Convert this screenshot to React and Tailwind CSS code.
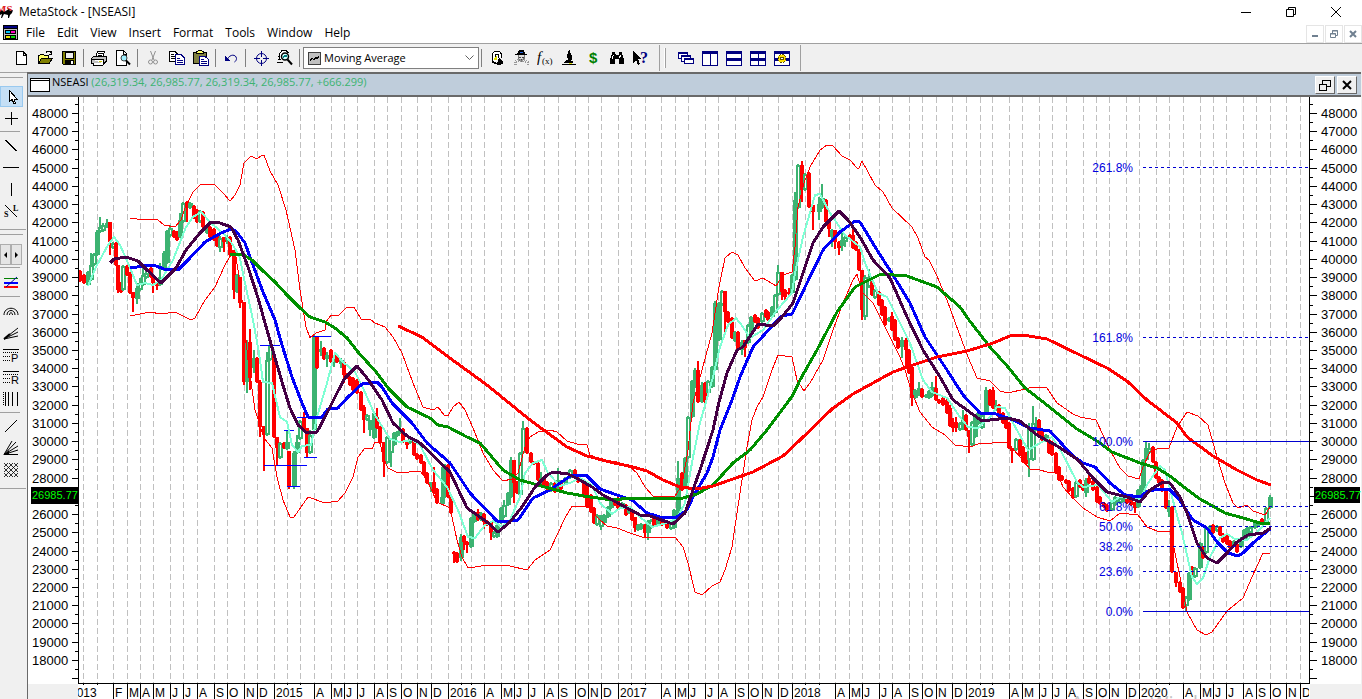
import React from 'react';

const MENUS = ['File', 'Edit', 'View', 'Insert', 'Format', 'Tools', 'Window', 'Help'];

// [x, label] for every month boundary, an empty label only draws the grid line
const MONTHS = [
  [83, ''], [97, ''], [113, 'F'], [127, 'M'], [140, 'A'], [153, 'M'], [170, 'J'], [183, 'J'], [197, 'A'],
  [214, 'S'], [227, 'O'], [244, 'N'], [257, 'D'], [274, '2015'], [287, ''], [300, ''], [314, 'A'],
  [331, 'M'], [344, 'J'], [357, 'J'], [374, 'A'], [387, 'S'], [401, 'O'], [417, 'N'], [431, 'D'],
  [448, '2016'], [461, ''], [471, ''], [484, 'A'], [501, 'M'], [514, 'J'], [528, 'J'], [544, 'A'],
  [558, 'S'], [575, 'O'], [588, 'N'], [601, 'D'], [618, '2017'], [631, ''], [645, ''], [661, 'A'],
  [675, 'M'], [688, 'J'], [705, 'J'], [718, 'A'], [735, 'S'], [748, 'O'], [762, 'N'], [778, 'D'],
  [792, '2018'], [805, ''], [819, ''], [835, 'A'], [849, 'M'], [862, 'J'], [879, 'J'], [892, 'A'],
  [909, 'S'], [922, 'O'], [936, 'N'], [952, 'D'], [966, '2019'], [980, ''], [992, ''], [1009, 'A'],
  [1022, 'M'], [1039, 'J'], [1052, 'J'], [1066, 'A'], [1083, 'S'], [1096, 'O'], [1109, 'N'],
  [1126, 'D'], [1139, '2020'], [1156, ''], [1169, ''], [1183, 'A'], [1200, 'M'], [1213, 'J'],
  [1226, 'J'], [1243, 'A'], [1256, 'S'], [1270, 'O'], [1286, 'N'], [1300, 'D'],
];

// kind (r = down, g = up, o = hollow up), x, top, bottom, high, low
const CANDLES = [
  ['r', 80, 271, 281], ['r', 84, 275, 283], ['g', 88, 272, 285], ['o', 91, 265, 280, 253], ['o', 94, 254, 265],
  ['g', 97, 232, 255, 230], ['o', 100, 227, 232, 217], ['o', 103, 225, 231, 223], ['g', 107, 223, 226, 219, 228],
  ['r', 110, 222, 242, 222, 255], ['o', 113, 243, 248], ['r', 116, 243, 265], ['r', 118, 265, 290, 265, 293],
  ['r', 121, 283, 292], ['o', 123, 266, 290], ['r', 127, 266, 275], ['r', 130, 273, 293],
  ['r', 133, 292, 298, 292, 312], ['g', 137, 288, 299, 283, 304], ['o', 140, 283, 290, 278], ['o', 143, 275, 285, 268],
  ['o', 146, 273, 278, 265], ['r', 151, 268, 277], ['r', 153, 275, 283, 275, 293], ['r', 157, 282, 286, 282, 290],
  ['g', 160, 277, 285, 263], ['g', 164, 253, 270, 251], ['g', 167, 231, 263], ['o', 170, 228, 236, 225],
  ['r', 174, 231, 237], ['r', 177, 232, 240], ['g', 180, 220, 237, 213], ['o', 183, 203, 222],
  ['r', 187, 202, 208, 201, 222], ['g', 190, 203, 208], ['r', 194, 206, 218], ['r', 197, 210, 222],
  ['o', 200, 211, 222], ['r', 203, 212, 227], ['g', 207, 227, 233], ['r', 210, 227, 237], ['r', 214, 229, 240],
  ['r', 217, 236, 246], ['o', 220, 238, 248, 236, 252], ['r', 224, 237, 242, 237, 252], ['o', 227, 237, 240, 235, 244],
  ['r', 230, 237, 255], ['r', 234, 250, 290, 250, 299], ['g', 237, 275, 292], ['r', 240, 277, 303, 277, 308],
  ['r', 244, 302, 382, 302, 385], ['g', 247, 343, 382, 340, 393], ['r', 250, 342, 378, 329, 390],
  ['g', 254, 358, 368, 350, 373], ['r', 257, 358, 382], ['r', 260, 382, 427, 380, 437],
  ['r', 264, 426, 435, 426, 471], ['o', 267, 360, 435, 352], ['o', 270, 345, 360, 343], ['r', 274, 355, 437],
  ['r', 277, 437, 448, 437, 465], ['o', 280, 443, 458], ['r', 284, 443, 448], ['g', 287, 442, 449, 430],
  ['r', 289, 451, 487, 451, 489], ['g', 294, 453, 487, 451, 489], ['g', 297, 442, 453, 435], ['o', 300, 421, 439],
  ['r', 304, 418, 428, 412], ['r', 307, 428, 453, 428, 457], ['o', 310, 435, 453, 430], ['g', 314, 336, 430],
  ['r', 317, 337, 368], ['g', 321, 349, 352, 341, 356], ['r', 324, 348, 359], ['o', 327, 355, 359, 352, 367],
  ['r', 331, 350, 362], ['o', 334, 360, 363, 358, 367], ['r', 337, 355, 362], ['g', 341, 360, 364, 358, 368],
  ['r', 344, 362, 375, 362, 383], ['r', 347, 374, 378], ['r', 350, 377, 385], ['r', 353, 378, 390],
  ['r', 357, 380, 393], ['r', 361, 392, 410], ['r', 364, 407, 420, 405, 433], ['o', 367, 415, 420],
  ['g', 370, 420, 430, 420, 436], ['g', 374, 413, 438], ['r', 377, 417, 428, 408], ['r', 380, 427, 443],
  ['r', 384, 442, 462, 442, 477], ['o', 387, 437, 463], ['o', 391, 438, 453, 438, 467], ['g', 394, 433, 445],
  ['o', 397, 432, 436], ['g', 400, 429, 433, 418], ['r', 403, 429, 442], ['r', 407, 440, 445, 440, 449],
  ['g', 410, 437, 443], ['r', 414, 441, 455], ['r', 417, 454, 459], ['r', 421, 455, 463], ['r', 424, 462, 475],
  ['r', 427, 473, 483], ['g', 431, 482, 485, 482, 492], ['r', 434, 482, 493, 467], ['r', 437, 489, 503],
  ['g', 442, 497, 504, 467], ['g', 445, 465, 497], ['r', 448, 465, 497], ['r', 451, 497, 513],
  ['r', 454, 552, 554, 551, 563], ['r', 457, 553, 562], ['g', 461, 537, 558, 534, 561], ['r', 464, 536, 542, 535, 550],
  ['r', 467, 542, 545, 541, 553], ['g', 471, 518, 547], ['g', 474, 513, 522], ['r', 478, 512, 520, 509],
  ['g', 481, 513, 520], ['r', 484, 514, 522, 513, 529], ['r', 487, 521, 525], ['r', 491, 522, 533, 522, 540],
  ['o', 494, 532, 537], ['g', 497, 525, 537], ['g', 501, 508, 523], ['o', 504, 505, 517, 500], ['g', 508, 493, 505],
  ['g', 511, 460, 497, 457], ['r', 514, 460, 483, 460, 503], ['r', 517, 482, 493], ['o', 520, 453, 495],
  ['o', 523, 428, 453, 421], ['r', 527, 428, 453], ['r', 531, 453, 462], ['r', 534, 462, 464], ['r', 538, 463, 480],
  ['g', 541, 478, 483, 472], ['r', 544, 477, 487], ['r', 547, 482, 489], ['o', 551, 483, 491], ['r', 555, 483, 492],
  ['g', 558, 480, 488, 468], ['r', 561, 482, 489], ['g', 565, 478, 483], ['o', 570, 470, 478], ['r', 575, 470, 478],
  ['r', 578, 475, 482], ['r', 584, 482, 497], ['r', 587, 483, 507], ['r', 591, 495, 512], ['r', 594, 508, 523],
  ['o', 597, 515, 525], ['o', 601, 520, 527, 515, 530], ['g', 604, 515, 523], ['g', 608, 507, 517],
  ['g', 611, 500, 508], ['r', 615, 500, 505], ['r', 618, 498, 508], ['g', 622, 503, 507], ['r', 626, 505, 515],
  ['g', 629, 507, 513], ['r', 632, 512, 520], ['r', 635, 517, 528, 517, 532], ['g', 638, 525, 530],
  ['g', 641, 524, 529], ['r', 645, 525, 533, 524, 537], ['g', 648, 523, 533, 520, 540], ['o', 651, 520, 528],
  ['r', 654, 518, 525], ['g', 658, 520, 525], ['r', 662, 520, 525], ['r', 667, 522, 528], ['o', 671, 522, 529],
  ['g', 674, 510, 528], ['g', 678, 478, 517, 461], ['r', 682, 473, 490], ['g', 685, 458, 488], ['o', 688, 417, 458],
  ['g', 692, 381, 417], ['g', 695, 370, 387, 368], ['r', 698, 370, 402, 361], ['g', 702, 385, 402, 382],
  ['r', 705, 383, 402], ['o', 708, 381, 393], ['g', 712, 367, 387], ['g', 715, 303, 370, 301], ['g', 719, 303, 340],
  ['o', 722, 291, 305], ['r', 725, 291, 312, 291, 334], ['r', 728, 312, 322], ['r', 732, 318, 338],
  ['g', 735, 332, 341], ['r', 738, 332, 350], ['g', 742, 342, 350, 340, 355], ['r', 745, 340, 348, 340, 357],
  ['o', 748, 325, 343], ['g', 751, 317, 333], ['r', 755, 315, 322], ['r', 758, 318, 328], ['o', 762, 313, 322],
  ['r', 766, 310, 317], ['r', 768, 312, 320], ['g', 772, 307, 317], ['o', 775, 295, 313], ['o', 778, 272, 295, 265],
  ['r', 782, 272, 292, 272, 300], ['r', 785, 290, 297, 289, 302], ['r', 789, 292, 294, 288, 296],
  ['g', 792, 275, 293], ['g', 795, 200, 280, 192], ['o', 798, 165, 208], ['r', 802, 165, 190, 161, 202],
  ['o', 805, 174, 190], ['r', 809, 173, 207], ['r', 813, 205, 212, 205, 230], ['g', 819, 204, 212, 197, 220],
  ['g', 822, 198, 208, 184], ['r', 826, 200, 222], ['r', 829, 221, 229, 221, 237], ['g', 832, 230, 237, 229, 247],
  ['r', 835, 230, 242, 230, 249], ['r', 839, 242, 248, 241, 255], ['g', 842, 240, 246, 232, 251],
  ['o', 845, 237, 242, 235, 247], ['r', 850, 235, 239], ['r', 853, 235, 248, 226], ['r', 856, 242, 250],
  ['r', 859, 250, 270], ['r', 862, 270, 310, 270, 320], ['o', 865, 277, 317, 275, 320], ['o', 869, 278, 287, 269],
  ['r', 872, 282, 295], ['o', 875, 290, 298], ['r', 879, 292, 305], ['r', 882, 300, 315], ['r', 885, 307, 325],
  ['g', 889, 318, 321], ['r', 892, 316, 330, 312], ['r', 895, 320, 340], ['r', 898, 338, 348], ['g', 902, 340, 347, 337, 358],
  ['r', 906, 340, 350, 338, 366], ['r', 909, 350, 373], ['r', 912, 367, 398, 365, 406], ['g', 915, 390, 398],
  ['g', 919, 388, 395, 382], ['r', 922, 389, 397], ['g', 926, 395, 397], ['g', 929, 391, 398],
  ['g', 932, 387, 396, 382], ['r', 936, 388, 400, 376], ['r', 939, 400, 403], ['r', 943, 398, 405],
  ['r', 947, 400, 413], ['r', 950, 408, 426, 405], ['r', 953, 424, 428, 418, 432], ['r', 956, 422, 428, 417, 432],
  ['o', 960, 423, 430], ['g', 963, 420, 426, 410, 430], ['r', 966, 415, 430], ['r', 969, 430, 437, 430, 453],
  ['o', 972, 422, 445], ['g', 975, 417, 437], ['g', 978, 413, 424], ['o', 982, 415, 428], ['g', 986, 390, 412, 387],
  ['r', 990, 390, 405], ['r', 993, 390, 408, 387], ['g', 996, 405, 410, 400], ['r', 999, 405, 417],
  ['r', 1003, 413, 423], ['r', 1006, 418, 428], ['r', 1009, 423, 448], ['r', 1012, 448, 451, 448, 463],
  ['o', 1016, 439, 450], ['r', 1020, 440, 455], ['r', 1023, 447, 462], ['r', 1026, 453, 464],
  ['o', 1029, 427, 460, 423, 477], ['o', 1033, 423, 460, 406], ['g', 1036, 423, 430, 417], ['r', 1039, 420, 435],
  ['r', 1042, 432, 440], ['g', 1046, 435, 441], ['r', 1049, 440, 453], ['r', 1052, 442, 455], ['r', 1056, 453, 473],
  ['r', 1059, 467, 480], ['r', 1062, 476, 480], ['r', 1066, 480, 483], ['r', 1069, 481, 491],
  ['r', 1073, 488, 498], ['o', 1076, 482, 497], ['r', 1080, 480, 487], ['r', 1083, 485, 490],
  ['g', 1086, 480, 493, 478, 497], ['r', 1089, 478, 483, 475], ['r', 1093, 481, 490], ['r', 1097, 487, 502],
  ['r', 1100, 497, 504], ['r', 1104, 503, 507], ['r', 1107, 505, 511], ['o', 1112, 502, 510], ['g', 1115, 497, 505],
  ['o', 1120, 498, 503], ['g', 1124, 497, 501], ['r', 1127, 496, 503], ['r', 1131, 498, 505],
  ['r', 1135, 502, 508, 502, 513], ['g', 1138, 490, 507], ['g', 1141, 486, 497], ['g', 1143, 460, 493],
  ['g', 1146, 448, 460, 441], ['o', 1149, 448, 453, 443], ['r', 1153, 447, 462], ['r', 1156, 462, 478],
  ['r', 1159, 477, 483], ['r', 1162, 480, 491], ['r', 1166, 490, 508], ['g', 1169, 507, 512, 500, 517],
  ['r', 1172, 507, 572], ['r', 1176, 572, 583, 572, 587], ['r', 1180, 582, 592], ['r', 1183, 588, 608],
  ['o', 1186, 597, 606, 596, 611], ['g', 1189, 573, 600], ['r', 1192, 567, 575], ['o', 1195, 568, 577],
  ['g', 1200, 543, 568], ['r', 1203, 547, 558], ['o', 1206, 528, 553], ['g', 1210, 526, 532], ['r', 1213, 525, 533],
  ['o', 1217, 526, 531], ['r', 1220, 527, 535], ['r', 1223, 534, 542], ['r', 1227, 535, 544], ['r', 1230, 541, 548],
  ['g', 1234, 541, 546], ['r', 1237, 544, 552], ['g', 1241, 538, 547], ['g', 1244, 530, 540], ['g', 1247, 528, 537],
  ['o', 1250, 527, 533], ['g', 1255, 523, 528, 520], ['g', 1259, 522, 525], ['r', 1262, 519, 523],
  ['o', 1266, 508, 523], ['g', 1270, 497, 508, 495],
];

const UPPER_BAND =
  '130,218 137,219 158,220 164,225 175,227 181,220 185,208 193,192 201,184 215,185 223,193 230,201 235,195 240,185 244,163 251,156 257,159 261,156 264,155 270,171 278,185 286,210 295,250 300,290 306,327 310,338 316,333 325,330 326,322 331,315 339,315 347,307 354,307 361,319 371,320 375,323 385,327 393,337 402,353 413,383 423,407 433,410 438,407 444,415 448,416 453,407 459,402 465,410 473,428 483,453 493,470 503,481 512,479 518,473 525,447 530,437 538,432 550,430 557,432 567,441 577,444 587,445 590,455 600,459 617,462 630,467 637,473 645,487 653,496 675,496 682,485 688,450 693,403 702,370 712,333 719,287 725,258 732,252 738,255 745,268 755,281 763,278 776,286 783,275 792,272 795,247 798,207 804,183 810,167 820,150 827,145 833,146 842,156 850,160 857,168 859,168 862,161 868,172 875,185 883,192 892,208 912,227 918,238 925,257 929,260 937,276 947,300 955,322 968,357 977,378 990,381 1000,391 1008,393 1025,389 1033,387 1047,388 1057,403 1073,414 1080,417 1096,420 1110,450 1120,468 1128,476 1139,479 1143,467 1150,452 1157,449 1169,448 1177,427 1187,412 1198,416 1208,425 1217,457 1225,483 1233,503 1238,508 1247,505 1253,511 1265,515 1270,507';

const LOWER_BAND =
  '130,316 150,312 161,314 175,312 191,320 195,318 205,300 215,287 225,265 231,255 236,257 241,290 248,360 255,410 264,438 272,448 277,477 283,500 290,517 294,517 308,497 325,503 338,501 345,493 353,477 358,457 365,448 372,449 375,442 380,442 383,457 388,468 398,473 420,471 427,480 437,502 450,508 457,540 462,557 468,568 488,565 510,566 527,570 535,560 550,550 558,533 565,518 572,506 587,506 600,520 607,526 617,528 630,533 645,538 657,537 675,537 683,547 688,563 695,592 702,595 712,586 720,582 725,570 732,547 737,513 742,480 747,447 752,420 757,407 763,397 772,370 778,355 792,357 797,380 804,391 810,383 823,360 833,330 843,303 853,280 857,274 862,292 873,303 890,337 900,357 905,370 912,393 920,412 932,427 945,435 955,445 970,447 978,444 1007,442 1020,457 1030,469 1040,470 1047,472 1057,472 1063,487 1073,498 1083,508 1097,517 1110,521 1120,513 1138,515 1147,527 1157,531 1170,532 1173,543 1182,587 1187,612 1197,630 1206,635 1212,632 1227,611 1243,598 1252,577 1263,553 1270,553';

const AVERAGES = [
  {
    name: 'aqua',
    color: '#7fffd4',
    width: 2,
    points:
      '88,286 96,267 108,245 114,237 120,245 128,263 137,285 145,283 153,285 161,280 173,260 186,227 193,217 201,212 211,223 225,235 233,245 240,258 245,283 253,320 259,353 263,382 272,383 280,417 287,422 292,445 298,452 302,446 311,445 317,417 327,383 335,353 343,362 355,372 363,388 375,415 390,439 400,442 412,440 420,445 433,470 447,487 458,510 468,537 475,538 485,525 493,521 502,527 510,520 520,497 525,473 533,463 542,460 548,473 560,486 570,483 580,478 592,485 600,503 612,514 620,508 630,507 640,517 652,527 667,523 677,518 685,503 693,457 700,423 713,377 720,347 728,325 736,318 743,327 750,338 763,330 777,310 792,293 795,273 803,237 815,195 820,194 830,213 845,235 860,247 865,263 878,293 887,297 900,323 910,343 923,380 932,392 947,398 960,417 968,427 978,428 990,417 997,407 1005,408 1013,423 1028,450 1040,443 1052,437 1062,453 1077,482 1083,487 1098,485 1112,502 1120,497 1140,499 1148,483 1160,466 1165,470 1172,497 1182,533 1192,577 1197,584 1203,578 1210,557 1220,538 1227,534 1235,539 1247,540 1257,532 1270,518',
  },
  {
    name: 'blue',
    color: '#0000f8',
    width: 3,
    points:
      '130,268 150,265 156,266 164,269 178,270 188,260 205,242 221,233 231,229 236,231 245,243 250,257 263,292 275,320 282,345 292,377 302,403 308,417 322,417 328,409 338,408 348,397 362,384 377,382 382,387 392,403 412,423 427,443 450,463 470,493 497,521 502,522 518,520 533,498 550,490 557,485 572,475 586,475 600,489 617,495 632,500 647,513 660,517 675,518 687,510 693,497 707,473 713,457 720,430 732,400 740,377 753,347 775,323 782,316 792,314 795,308 807,283 823,250 840,232 855,221 860,222 877,250 893,275 910,303 925,337 947,370 963,395 980,413 993,413 1013,420 1030,428 1050,431 1073,456 1083,463 1095,467 1110,483 1125,495 1140,497 1148,491 1160,489 1169,489 1178,498 1193,520 1207,528 1217,542 1228,553 1238,556 1243,553 1253,543 1270,529',
  },
  {
    name: 'green',
    color: '#009000',
    width: 3,
    points:
      '230,254 242,254 252,260 262,270 275,282 287,295 300,308 310,317 325,322 335,328 347,338 358,352 377,373 388,388 407,407 430,418 438,425 448,427 467,437 480,443 503,470 520,480 545,487 567,493 590,497 613,500 630,498 650,498 683,498 697,494 713,485 733,463 750,450 767,430 793,395 800,380 817,350 837,312 855,287 867,281 881,274 907,276 937,287 960,307 969,320 990,347 1008,367 1025,388 1047,405 1077,429 1097,441 1112,452 1140,463 1157,468 1170,476 1185,488 1200,499 1225,513 1243,518 1260,523 1270,523',
  },
  {
    name: 'red',
    color: '#ff0000',
    width: 3,
    points:
      '398,326 422,337 447,356 487,385 530,420 567,447 587,456 610,462 633,467 647,471 663,480 680,487 697,489 713,486 753,472 783,456 800,440 832,409 853,394 893,372 913,365 937,357 967,351 993,343 1010,336 1023,335 1047,339 1080,355 1107,368 1127,381 1147,400 1177,423 1187,437 1213,456 1237,470 1257,480 1271,485',
  },
  {
    name: 'purple',
    color: '#440044',
    width: 3,
    points:
      '110,263 114,259 126,257 138,261 146,269 161,283 176,268 186,250 200,233 211,222 220,223 231,227 238,240 248,267 258,298 271,344 282,382 290,408 298,425 307,433 317,432 325,417 337,393 345,378 357,366 367,378 382,400 393,423 407,436 420,443 450,472 467,508 487,522 498,532 510,522 522,507 535,487 547,475 553,472 568,474 580,480 592,487 603,495 627,508 640,515 650,516 673,524 685,513 693,490 700,470 713,430 719,402 727,373 737,350 743,347 758,324 773,326 782,317 793,303 803,273 813,243 823,227 832,218 839,211 848,220 860,237 873,260 890,278 907,317 923,350 940,377 953,400 982,421 1007,418 1020,421 1037,435 1057,446 1077,459 1093,478 1107,492 1127,497 1140,502 1150,490 1163,482 1170,483 1180,497 1187,513 1197,543 1207,558 1217,563 1227,553 1237,542 1248,535 1263,533 1271,528',
  },
];

const FIB = [
  ['261.8%', 167, true],
  ['161.8%', 337, true],
  ['100.0%', 441, false],
  ['61.8%', 506, true],
  ['50.0%', 526, true],
  ['38.2%', 546, true],
  ['23.6%', 571, true],
  ['0.0%', 611, false],
];

// short horizontal support / resistance marks: x1, x2, y
const MARKS = [
  [260, 280, 345], [310, 331, 336], [297, 323, 417], [284, 294, 430], [304, 317, 457], [264, 307, 465], [287, 300, 486],
];

const PRICES = Array.from({ length: 31 }, (_, i) => 48000 - i * 1000);
const priceY = (v) => Math.round(113 + ((48000 - v) / 1000) * 18.23);

const Candle = ({ data }) => {
  const [kind, x, top, bottom, high = top - 1, low = bottom + 1] = data;
  const color = kind === 'r' ? '#ff0000' : '#3cb371';
  return (
    <g fill={color}>
      <rect x={x - 1} y={high} width="2" height={low - high} />
      <rect x={x - 2} y={top} width={kind === 'r' ? 4 : 5} height={bottom - top} />
      {kind === 'o' && bottom - top > 4 && (
        <rect x={x} y={top + 2} width="1" height={bottom - top - 4} fill="#fff" />
      )}
    </g>
  );
};

const Chart = () => (
  <svg
    viewBox="28 97 1333 602"
    className="block h-auto w-full bg-white font-['Liberation_Sans',Arial,sans-serif]"
    role="img"
    aria-label="NSEASI weekly price chart"
  >
    <g shapeRendering="crispEdges">
      <g stroke="#c0c0c0" strokeDasharray="6 3">
        {MONTHS.map(([x]) => (
          <line key={x} x1={x + 0.5} x2={x + 0.5} y1="97" y2="683" />
        ))}
      </g>
      <g>
        {CANDLES.map((c) => (
          <Candle key={c[1]} data={c} />
        ))}
      </g>
      <g stroke="#0000ff">
        {MARKS.map(([x1, x2, y]) => (
          <line key={y} x1={x1} x2={x2} y1={y + 0.5} y2={y + 0.5} />
        ))}
      </g>
      <g fill="none" strokeLinejoin="round">
        <polyline points={UPPER_BAND} stroke="#ff0000" />
        <polyline points={LOWER_BAND} stroke="#ff0000" />
        {AVERAGES.map((a) => (
          <polyline key={a.name} points={a.points} stroke={a.color} strokeWidth={a.width} />
        ))}
      </g>
      <g stroke="#0000d0">
        {FIB.map(([label, y, dashed]) => (
          <line key={label} x1="1143" x2="1309" y1={y + 0.5} y2={y + 0.5} strokeDasharray={dashed ? '3 3' : undefined} />
        ))}
      </g>
    </g>
    <g fill="#0000e0" fontSize="12" textAnchor="end">
      {FIB.map(([label, y]) => (
        <text key={label} x="1133" y={y + 5}>
          {label}
        </text>
      ))}
    </g>

    {/* price axes */}
    <g shapeRendering="crispEdges" stroke="#000">
      <path d="M78.5 97V684M1309.5 97V684M78 683.5H1310" />
      {PRICES.map((v) => {
        const y = priceY(v) + 0.5;
        return (
          <path key={v} d={`M72 ${y}H78M1310 ${y}H1317M75 ${y - 9}H78M1310 ${y - 9}H1313`} />
        );
      })}
      <path d="M75 669.5H78M1310 669.5H1313M72 678.5H78M1310 678.5H1317" />
    </g>
    <g fontSize="13">
      {PRICES.filter((v) => v !== 27000).map((v) => (
        <React.Fragment key={v}>
          <text x="32" y={priceY(v) + 5}>{v}</text>
          <text x="1321" y={priceY(v) + 5}>{v}</text>
        </React.Fragment>
      ))}
    </g>
    <rect x="31" y="487" width="48" height="17" />
    <rect x="1314" y="487" width="46" height="16" />
    <g fill="#00ff00" fontSize="11">
      <text x="32" y="499">26985.77</text>
      <text x="1315" y="499">26985.77</text>
    </g>

    {/* time axis */}
    <rect x="28" y="684" width="50" height="15" fill="#f0f0f0" />
    <rect x="1310" y="684" width="51" height="15" fill="#f0f0f0" />
    <text x="1071" y="710" fontSize="20" fill="#c4c4c4" className="font-['Open_Sans',sans-serif]">
      Activate Windows
    </text>
    <g shapeRendering="crispEdges" stroke="#000">
      {MONTHS.map(([x, label]) => (
        <line key={x} x1={x + 0.5} x2={x + 0.5} y1="684" y2={label ? 699 : 685} />
      ))}
    </g>
    <svg x="78" y="684" width="1231" height="15" viewBox="78 684 1231 15" fontSize="12">
      <text x="70" y="697">2013</text>
      {MONTHS.map(([x, label]) => (
        <text key={x} x={x + 2} y="697">
          {label}
        </text>
      ))}
    </svg>
  </svg>
);

const Icon = ({ children, size = 16 }) => (
  <svg width={size} height={size} viewBox="0 0 16 16" fill="none" stroke="#000" shapeRendering="crispEdges">
    {children}
  </svg>
);

const NAVY = '#000080';

const TOOLS = [
  [
    ['New', <path d="M3.5 1.5H10L13.5 5V14.5H3.5ZM10 1.5V5.5H13.5" fill="#fff" />],
    [
      'Open',
      <>
        <path d="M1.5 13V5.5H2.5L3.5 4.5H6.5L7.5 5.5H11.5V8" fill="#ffff66" />
        <path d="M1.5 13.5L4.5 8.5H15.5L12 13.5Z" fill="#808000" />
        <path d="M9 2.5L10 1.5H13L14.5 3.5M14.5 1V4.5H11.5" />
      </>,
    ],
    [
      'Save',
      <>
        <path d="M1.5 1.5H14.5V14.5H2.5L1.5 13.5Z" fill="#808000" />
        <path d="M4.5 2H12V8H4.5Z" fill="#f0f0f0" stroke="#000" />
        <rect x="4" y="10" width="9" height="5" fill="#000" stroke="none" />
        <rect x="10" y="11" width="2" height="3" fill="#fff" stroke="none" />
      </>,
    ],
  ],
  [
    [
      'Print',
      <>
        <path d="M4.5 7.5L6.5 1.5H13.5L11.5 7.5" fill="#fff" />
        <path d="M7 3.5H11.5M6.5 5.5H10.5" />
        <path d="M0.5 8.5L2.5 6.5H15.5V11L13 13.5H0.5Z" fill="#c0c0c0" />
        <path d="M0.5 9.5H12.5V13.5M2.5 13.5V15.5H11.5L14 13" fill="#fff" />
        <path d="M8 11.5H11" stroke="#d0d000" />
      </>,
    ],
    [
      'Print preview',
      <>
        <path d="M1.5 0.5H8.5L11.5 3.5V15.5H1.5ZM8.5 1V4H11.5" fill="#fff" />
        <circle cx="9" cy="8" r="3" fill="#a0f0ff" stroke="#404040" shapeRendering="auto" />
        <path d="M11 10.5L15 14.5" strokeWidth="2" shapeRendering="auto" />
      </>,
    ],
  ],
  [
    [
      'Cut',
      <g stroke="#909090" shapeRendering="auto">
        <path d="M5.5 1L9 10M10.5 1L7 10" />
        <circle cx="5.5" cy="12" r="2" />
        <circle cx="10.5" cy="12" r="2" />
      </g>,
    ],
    [
      'Copy',
      <>
        <path d="M0.5 1.5H6L8.5 4V11.5H0.5Z" fill="#fff" />
        <path d="M2 4.5H5M2 6.5H6M2 8.5H6" />
        <path d="M6.5 4.5H12L15.5 8V14.5H6.5Z" fill="#fff" stroke={NAVY} />
        <path d="M8 8.5H11M8 10.5H14M8 12.5H14" stroke={NAVY} />
      </>,
    ],
    [
      'Paste',
      <>
        <path d="M0.5 2.5H13.5V13.5H0.5Z" fill="#808040" />
        <path d="M3.5 3.5V2L6 0.5H8.5L10.5 2V3.5Z" fill="#ffff66" />
        <path d="M6.5 6.5H12L15.5 9.5V15.5H6.5Z" fill="#fff" stroke={NAVY} />
        <path d="M8 9.5H11M8 11.5H14M8 13.5H14" stroke={NAVY} />
      </>,
    ],
  ],
  [
    [
      'Undo',
      <>
        <path d="M4.5 9C7 4 13 4 13.5 8.5C13.5 10 12.5 11.5 11.5 12" stroke={NAVY} shapeRendering="auto" />
        <path d="M2 6V11H7Z" fill={NAVY} stroke="none" />
      </>,
    ],
  ],
  [
    [
      'Crosshair',
      <g stroke={NAVY}>
        <circle cx="8.5" cy="8.5" r="5" shapeRendering="auto" />
        <path d="M8.5 1V6.5M8.5 10V16M1 8.5H6.5M10 8.5H16" />
      </g>,
    ],
    [
      'Zoom',
      <>
        <path d="M2.5 10V3.5L5 0.5H9L11.5 3M0 12.5H6" fill="#fff" />
        <path d="M1 9.5H4M1 6.5H3" />
        <circle cx="8" cy="6.5" r="3.5" fill="#d8ffff" strokeWidth="1.5" shapeRendering="auto" />
        <path d="M6 7.5L8 5.5L9 7L10 5" stroke="#008080" />
        <path d="M10.5 9.5L15 14.5" strokeWidth="2" shapeRendering="auto" />
      </>,
    ],
  ],
];

const ANALYSIS = [
  [
    'Explorer',
    <>
      <path d="M3.5 13V3.5L5.5 1.5H10.5L12 3.5V8" fill="#fff" />
      <path d="M6.5 4.5H9.5V8M6.5 3.5V10" />
      <path d="M5 8L8 5V10H5Z" fill="#e0e000" stroke="none" />
      <path d="M3 10L8 13L10 8L14 11V14L9 15L3 13Z" fill="#000" stroke="none" />
    </>,
  ],
  [
    'Expert advisor',
    <>
      <path d="M4 4L6 0H11L12 4Z" fill="#000" stroke="none" />
      <path d="M2 4.5H14" />
      <path d="M7 2.5H10" stroke="#2060e0" />
      <path d="M5.5 5V9L8 11.5L11.5 8V5" fill="#ddd" stroke="#777" />
      <path d="M6 7.5H8M9 7.5H11M7 9.5H10" stroke="#444" />
      <path d="M2 15V12L5 10.5H11L15 12.5V15" stroke="#999" strokeDasharray="1 1" strokeWidth="3" />
    </>,
  ],
  [
    'Indicator builder',
    <g fill="#000" stroke="none" shapeRendering="auto" className="font-['Liberation_Serif',serif]">
      <text x="0" y="12" fontSize="15" fontStyle="italic">f</text>
      <text x="5" y="14" fontSize="9">(x)</text>
    </g>,
  ],
  [
    'System tester',
    <>
      <path d="M7 1L9 0L10 5L11 6V10L9 11H12V13H3V12L8 9L6 8Z" fill="#000" stroke="none" />
      <path d="M1 14.5H15" />
      <path d="M8 13.5H11" stroke="#e0e000" />
    </>,
  ],
  [
    'Option scope',
    <text x="4" y="13" fontSize="15" fontWeight="bold" fill="#008000" stroke="none" className="font-['Liberation_Sans',sans-serif]">
      $
    </text>,
  ],
  [
    'Downloader',
    <>
      <path d="M3 2H6V4L7 5H9L10 4V2H13V4L15 9V14H10V9H6V14H1V9L3 4Z" fill="#000" stroke="none" />
      <path d="M4.5 5L3 9M11.5 5L10.5 8" stroke="#fff" />
    </>,
  ],
  [
    'Help',
    <>
      <path d="M0 1V13L3 10L5 15L7 14L5 9H9Z" fill="#000" stroke="none" />
      <text x="7" y="13" fontSize="16" fontWeight="bold" fill={NAVY} stroke="none" className="font-['Liberation_Serif',serif]">
        ?
      </text>
    </>,
  ],
];

const LAYOUTS = [
  [
    'Cascade',
    <g stroke={NAVY} fill="#fff">
      <path d="M0.5 2.5H9.5V8.5H0.5Z" />
      <path d="M0 3H10" strokeWidth="2" />
      <path d="M3.5 5.5H12.5V11.5H3.5Z" />
      <path d="M3 6H13" strokeWidth="2" />
      <path d="M6.5 8.5H15.5V13.5H6.5Z" />
      <path d="M6 9H16" strokeWidth="2" />
    </g>,
  ],
  [
    'Tile columns',
    <g stroke={NAVY} fill="#fff">
      <path d="M0.5 1.5H15.5V15.5H0.5ZM8 2V15" />
      <path d="M0 2H16" strokeWidth="3" />
    </g>,
  ],
  [
    'Tile rows',
    <g stroke={NAVY} fill="#fff">
      <path d="M0.5 1.5H15.5V15.5H0.5Z" />
      <path d="M0 2H16M0 9H16" strokeWidth="3" />
    </g>,
  ],
  [
    'Stack',
    <g stroke={NAVY} fill="#fff">
      <path d="M0.5 1.5H15.5V15.5H0.5ZM8 2V15" />
      <path d="M0 2H16M0 9H16" strokeWidth="3" />
    </g>,
  ],
  [
    'Layout settings',
    <>
      <path d="M0.5 1.5H15.5V15.5H0.5Z" stroke={NAVY} fill="#fff" />
      <path d="M0 2H16M0 9H16" strokeWidth="3" stroke={NAVY} />
      <circle cx="8" cy="8.5" r="4" fill="#ffe000" stroke="#605000" strokeDasharray="2 1" />
      <circle cx="8" cy="8.5" r="1.5" fill="#fff" stroke="#605000" />
    </>,
  ],
];

const DRAW_TOP = [
  ['Crosshair cursor', <path d="M8.5 2V15M2 8.5H15" />],
  null,
  ['Trendline by slope', <path d="M2.5 3L13.5 14" />],
  ['Horizontal line', <path d="M0 8.5H16" />],
  ['Vertical line', <path d="M8.5 2V15" />],
  [
    'Speed lines',
    <>
      <path d="M2 2L14 14" />
      <g fill="#000" stroke="none" fontSize="8" fontWeight="bold" className="font-['Liberation_Serif',serif]">
        <text x="1" y="14">S</text>
        <text x="10" y="8">L</text>
      </g>
    </>,
  ],
];

const DRAW_BOTTOM = [
  [
    'Fibonacci arcs',
    <g shapeRendering="auto">
      <path d="M1 12C1 3 15 3 15 12M4 12C4 6 12 6 12 12M6.5 12C6.5 9 9.5 9 9.5 12" />
    </g>,
  ],
  [
    'Fibonacci fans',
    <g shapeRendering="auto">
      <path d="M1 14L15 3M1 14L15 7M1 14L15 11" />
      <path d="M1 14L7 9" strokeWidth="2" />
    </g>,
  ],
  [
    'Fibonacci projection',
    <>
      <path d="M0 2.5H16" />
      <path d="M0 5.5H16M0 9.5H7M0 13.5H7" strokeDasharray="1 1" />
      <text x="8" y="15" fontSize="11" fill="#000" stroke="none" className="font-['Liberation_Sans',sans-serif]">P</text>
    </>,
  ],
  [
    'Fibonacci retracement',
    <>
      <path d="M0 2.5H16" />
      <path d="M0 5.5H16M0 9.5H7M0 13.5H7" strokeDasharray="1 1" />
      <text x="8" y="15" fontSize="11" fill="#000" stroke="none" className="font-['Liberation_Sans',sans-serif]">R</text>
    </>,
  ],
  [
    'Fibonacci time zones',
    <>
      <path d="M0.5 1V15" strokeDasharray="1 1" />
      <path d="M2.5 1V15M5.5 1V15M9.5 1V15M14.5 1V15" />
    </>,
  ],
  null,
  ['Trendline', <path d="M2 14L14 2" />],
  [
    'Gann fan',
    <g shapeRendering="auto">
      <path d="M1 14.5H15M1 14.5L15 10M1 14.5L15 6M1 14.5L13 2M1 14.5L9 1" />
      <path d="M1 15L6 10V15Z" fill="#000" stroke="none" />
    </g>,
  ],
  [
    'Gann grid',
    <path
      d="M1 1L15 15M1 6L10 15M1 11L5 15M6 1L15 10M11 1L15 5M15 1L1 15M10 1L1 10M5 1L1 5M15 6L6 15M15 11L11 15"
      strokeWidth="0.8"
      shapeRendering="auto"
    />,
  ],
];

const ToolButton = ({ label, icon }) => (
  <button type="button" aria-label={label} className="flex h-6 w-6 items-center justify-center">
    <Icon>{icon}</Icon>
  </button>
);

const Divider = () => <div className="mr-[3px] ml-[2px] h-[18px] w-px bg-[#808080]" />;

const SideTools = ({ items }) =>
  items.map((item, i) =>
    item ? (
      <button key={item[0]} type="button" aria-label={item[0]} className="flex h-[22px] w-[22px] items-center justify-center">
        <Icon>{item[1]}</Icon>
      </button>
    ) : (
      <div key={i} className="my-[2px] h-px w-5 bg-[#a0a0a0]" />
    )
  );

const App = () => {
  return (
    <div className="flex flex-col overflow-hidden bg-white font-['Open_Sans','Noto_Sans',sans-serif] text-xs text-black">
      <header className="flex h-6 items-center justify-between">
        <div className="flex items-center">
          <svg width="14" height="14" viewBox="0 0 14 14" className="mr-[5px]">
            <text x="-4" y="8" fontSize="11" fontWeight="bold" fill="#e02020" className="font-['Liberation_Serif',serif]">
              MS
            </text>
            <path d="M0 7L2 5L4 7L9 4L10 6L13 5L12 8L10 10L9 13H8V10L4 9L2 13H1L2 9L0 10Z" fill="#000" />
          </svg>
          <h1 className="text-xs">MetaStock - [NSEASI]</h1>
        </div>
        <div className="mr-1 flex">
          <button type="button" aria-label="Minimize" className="flex h-5 w-[45px] items-center justify-center">
            <svg width="10" height="10" stroke="#000" fill="none"><path d="M0 5.5H10" /></svg>
          </button>
          <button type="button" aria-label="Restore" className="flex h-5 w-[45px] items-center justify-center">
            <svg width="10" height="10" stroke="#000" fill="none"><path d="M0.5 2.5H7.5V9.5H0.5ZM2.5 2.5V0.5H9.5V7.5H7.5" /></svg>
          </button>
          <button type="button" aria-label="Close" className="flex h-5 w-[45px] items-center justify-center">
            <svg width="10" height="10" stroke="#000" fill="none"><path d="M0 0L10 10M10 0L0 10" /></svg>
          </button>
        </div>
      </header>

      <nav className="flex h-[19px] items-center justify-between">
        <div className="flex items-center pb-[2px]">
          <svg width="15" height="15" viewBox="0 0 15 15" className="mr-2 ml-[3px]" shapeRendering="crispEdges">
            <rect width="15" height="15" fill="#000" />
            <rect x="1" y="1" width="13" height="2" fill={NAVY} />
            <rect x="1" y="4" width="13" height="10" fill="#c0c0c0" />
            <rect x="2" y="5" width="11" height="4" fill="#000" />
            <rect x="3" y="6" width="4" height="2" fill="#00c8ff" />
            <rect x="8" y="6" width="4" height="2" fill="#ff00c0" />
            <rect x="2" y="10" width="11" height="4" fill="#000" />
            <rect x="3" y="11" width="4" height="2" fill="#e8e800" />
            <rect x="8" y="11" width="4" height="2" fill="#00e000" />
          </svg>
          <div className="flex gap-3">
            {MENUS.map((m) => (
              <button key={m} type="button">
                {m}
              </button>
            ))}
          </div>
        </div>
        <div className="flex gap-px text-[#708090]">
          <button type="button" aria-label="Minimize chart" className="flex h-[18px] w-[18px] items-center justify-center border border-[#e5e5e5]">
            <svg width="8" height="8"><path d="M1 6H7" stroke="currentColor" strokeWidth="2" /></svg>
          </button>
          <button type="button" aria-label="Restore chart" className="flex h-[18px] w-[18px] items-center justify-center border border-[#e5e5e5]">
            <svg width="8" height="8" fill="none" stroke="currentColor"><path d="M0.5 3.5H5.5V7.5H0.5ZM0 4H6M2.5 3V0.5H7.5V5.5H6M2 1H8" /></svg>
          </button>
          <button type="button" aria-label="Close chart" className="flex h-[18px] w-[18px] items-center justify-center border border-[#e5e5e5]">
            <svg width="8" height="8"><path d="M1 1L7 7M7 1L1 7" stroke="currentColor" strokeWidth="2" /></svg>
          </button>
        </div>
      </nav>

      <div className="flex h-[29px] items-center border-t border-[#a0a0a0] bg-[#f0f0f0] pl-[9px]">
        {TOOLS.map((group, i) => (
          <React.Fragment key={i}>
            {group.map(([label, icon]) => (
              <ToolButton key={label} label={label} icon={icon} />
            ))}
            <Divider />
          </React.Fragment>
        ))}
        <div className="relative flex h-[22px] w-[176px] items-center border border-[#808080] bg-white">
          <svg width="13" height="13" viewBox="0 0 13 13" className="ml-1" fill="none" shapeRendering="crispEdges" aria-hidden="true">
            <rect x="0.5" y="0.5" width="12" height="12" fill="#c0c0c0" stroke="#404040" />
            <path d="M2 9L4 6L6 8L8 5L9 7L11 4" stroke="#000" />
          </svg>
          <select aria-label="Indicator" className="h-5 flex-1 appearance-none bg-transparent pl-[3px] text-[11px] outline-none">
            <option>Moving Average</option>
          </select>
          <svg width="9" height="6" className="pointer-events-none absolute right-1" fill="none" stroke="#606060">
            <path d="M0.5 0.5L4.5 4.5L8.5 0.5" />
          </svg>
        </div>
        <Divider />
        {ANALYSIS.map(([label, icon]) => (
          <ToolButton key={label} label={label} icon={icon} />
        ))}
        <div className="mr-1 ml-[6px] h-[26px] w-px bg-[#a0a0a0]" />
        <div className="mr-2 h-5 w-[2px] border-r border-[#a0a0a0] bg-white" />
        {LAYOUTS.map(([label, icon]) => (
          <ToolButton key={label} label={label} icon={icon} />
        ))}
        <div className="ml-[6px] h-[26px] w-px bg-[#a0a0a0]" />
      </div>

      <div className="flex bg-[#f0f0f0]">
        <aside className="w-[27px] shrink-0 border-t border-[#a0a0a0] bg-[#f0f0f0]">
          <div className="mt-1 mb-2 h-px w-[23px] bg-[#a0a0a0]" />
          <button
            type="button"
            aria-label="Select"
            className="flex h-[21px] w-[23px] items-center justify-center border border-[#99c9ef] bg-[#c5dff5]"
          >
            <Icon>
              <path d="M5.5 1.5V12.5L8 10.5L10 14.5H11.5L10 10H13Z" fill="#fff" />
            </Icon>
          </button>
          <SideTools items={DRAW_TOP} />
          <div className="mt-[7px] mb-1 h-px w-[26px] bg-[#a0a0a0]" />
          <div className="mb-[9px] h-px w-[23px] bg-[#a0a0a0]" />
          <div className="flex">
            <button type="button" aria-label="Scroll left" className="flex h-[21px] w-[11px] items-center justify-center border border-[#adadad] bg-[#e5e5e5]">
              <svg width="3" height="6"><path d="M3 0V6L0 3Z" /></svg>
            </button>
            <button type="button" aria-label="Scroll right" className="flex h-[21px] w-[11px] items-center justify-center border border-[#adadad] bg-[#e5e5e5]">
              <svg width="3" height="6"><path d="M0 0V6L3 3Z" /></svg>
            </button>
          </div>
          <div className="mt-[2px] mb-[3px] h-px w-5 bg-[#a0a0a0]" />
          <button type="button" aria-label="Line styles" className="flex h-[22px] w-[22px] items-center justify-center">
            <Icon>
              <path d="M1 4H15" stroke="#008000" />
              <path d="M1 8.5H15" stroke="#0000ff" strokeWidth="2" />
              <path d="M1 13H15" stroke="#ff0000" strokeWidth="2" />
              <path d="M3 13L14 3" stroke="#0000a0" shapeRendering="auto" />
            </Icon>
          </button>
          <div className="my-[3px] h-px w-5 bg-[#a0a0a0]" />
          <SideTools items={DRAW_BOTTOM} />
          <div className="mt-[7px] h-px w-[26px] bg-[#a0a0a0]" />
        </aside>

        <main className="mr-px min-w-0 flex-1 border-t-2 border-l border-[#696969]">
          <div className="flex h-[23px] items-center justify-between border-b-2 border-[#696969] bg-[#bfcddb] pr-1 pl-[2px]">
            <div className="flex items-center">
              <svg width="20" height="14" className="mr-[2px]" shapeRendering="crispEdges" aria-hidden="true">
                <rect x="0.5" y="0.5" width="19" height="13" fill="#fff" stroke="#000" />
                <path d="M0 2.5H20" stroke="#000" />
              </svg>
              <h2 className="mb-1 text-[11px]">
                NSEASI <span className="text-[#3cb371]">(26,319.34, 26,985.77, 26,319.34, 26,985.77, +666.299)</span>
              </h2>
            </div>
            <div className="flex gap-[2px]">
              <button
                type="button"
                aria-label="Restore NSEASI"
                className="flex h-[18px] w-5 items-center justify-center border border-t-white border-r-[#696969] border-b-[#696969] border-l-white bg-[#f0f0f0]"
              >
                <svg width="12" height="12" fill="none" stroke="#000" shapeRendering="crispEdges">
                  <path d="M0.5 5.5H7.5V11.5H0.5ZM0 5H8M3.5 5V1.5H11.5V7.5H8M3 1H12" />
                </svg>
              </button>
              <button
                type="button"
                aria-label="Close NSEASI"
                className="flex h-[18px] w-5 items-center justify-center border border-t-white border-r-[#696969] border-b-[#696969] border-l-white bg-[#f0f0f0]"
              >
                <svg width="10" height="10"><path d="M1 1L9 9M9 1L1 9" stroke="#000" strokeWidth="2" /></svg>
              </button>
            </div>
          </div>
          <Chart />
        </main>
      </div>
    </div>
  );
};

export default App;
